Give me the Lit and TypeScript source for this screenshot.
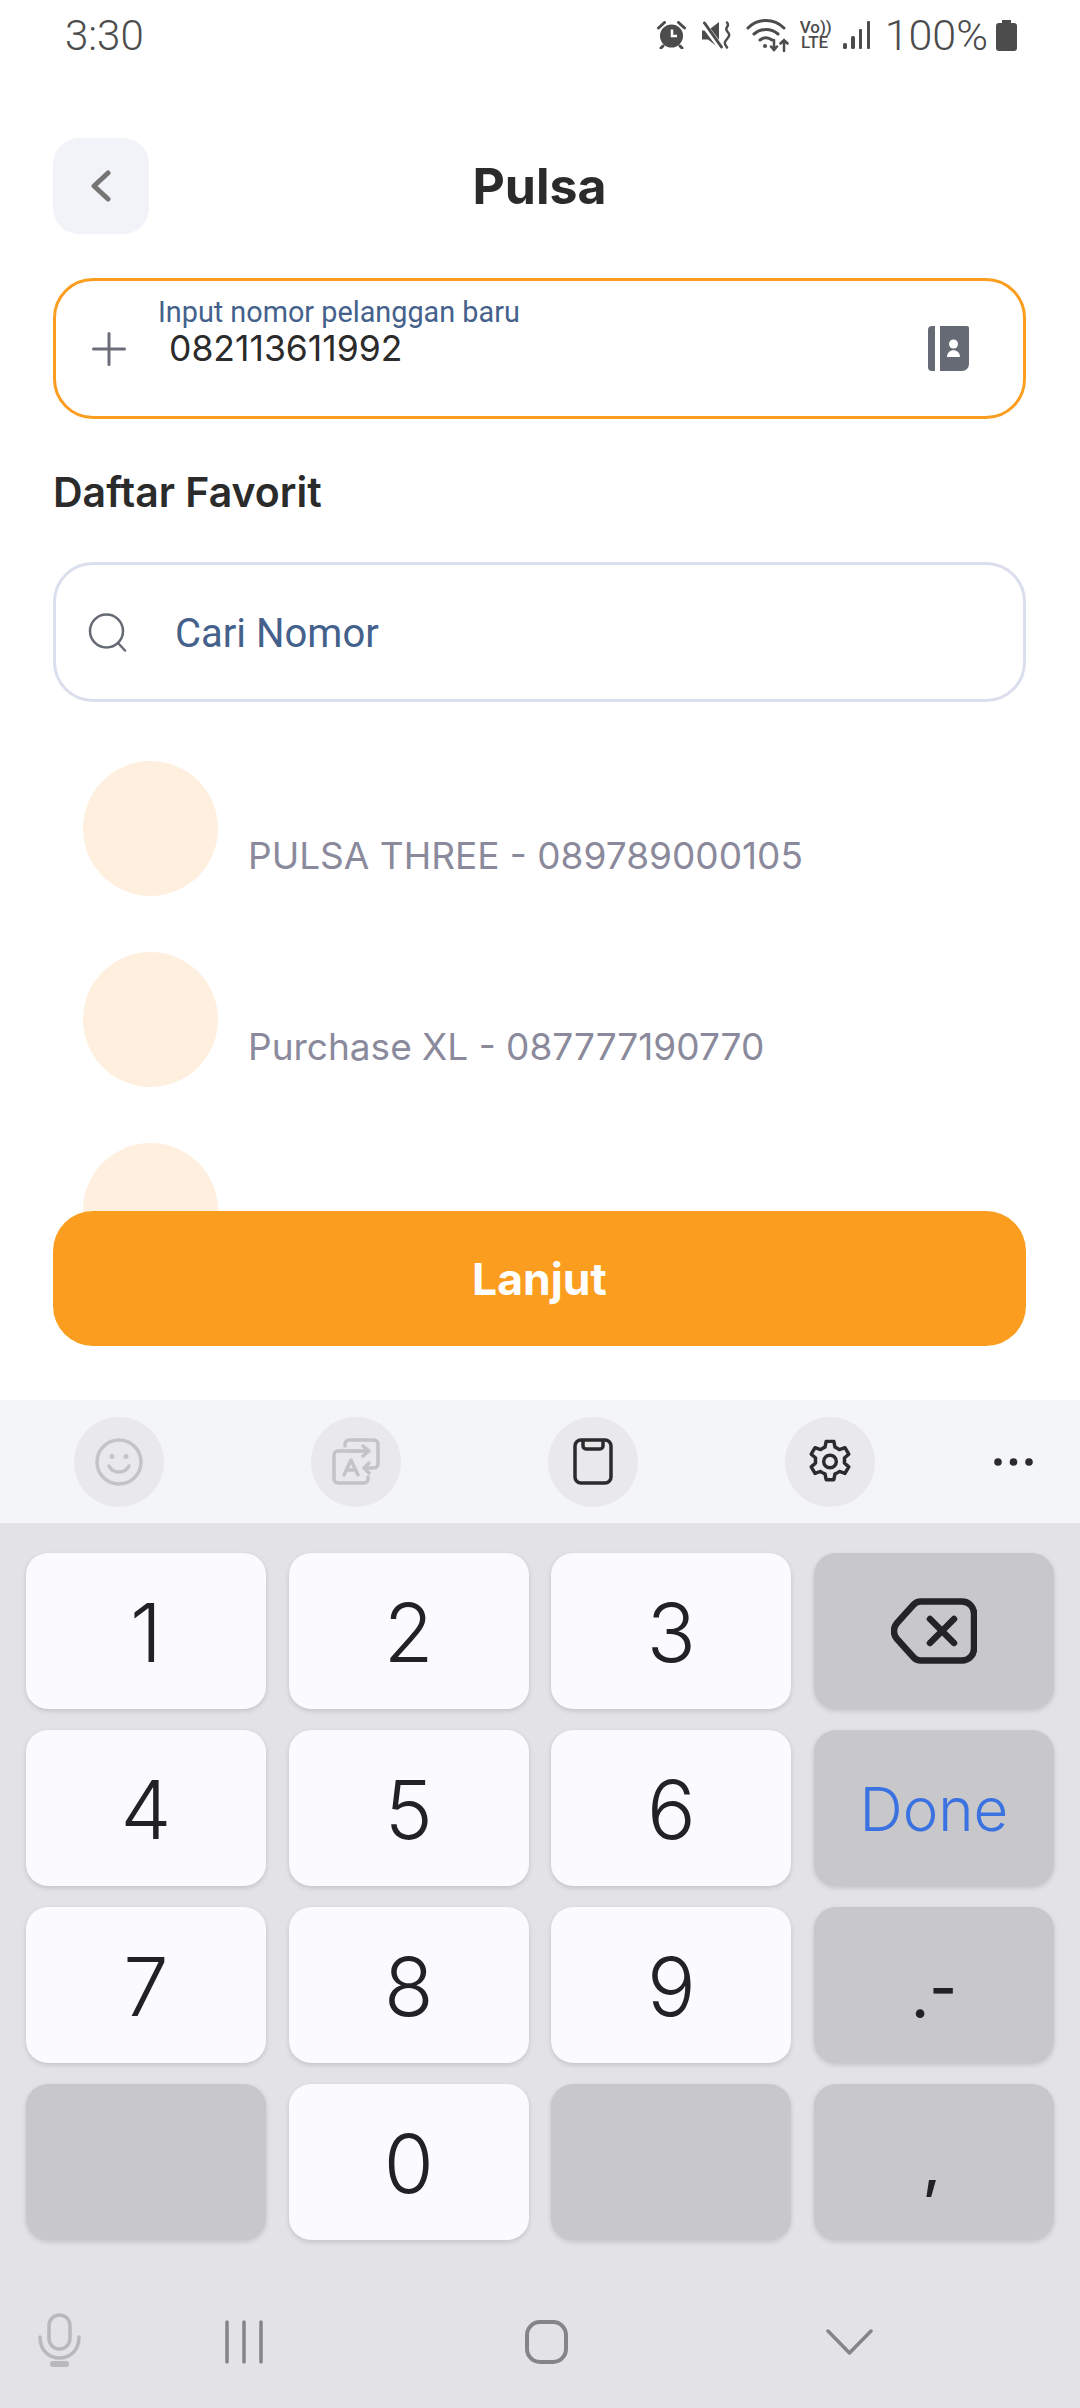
import { LitElement, html, css, svg } from 'lit';
import { customElement } from 'lit/decorators.js';

const backspaceIcon = svg`
  <svg width="86" height="66" viewBox="0 0 86 66" fill="none" stroke="#242426" stroke-width="6.500" stroke-linejoin="round" stroke-linecap="round">
    <path d="M30 3.500h41a12 12 0 0 1 12 12v35a12 12 0 0 1-12 12H30a10 10 0 0 1-7.500-3.300L6 41a12 12 0 0 1 0-16L22.500 6.800a10 10 0 0 1 7.500-3.300z"/>
    <path d="M39 21l24 24M63 21L39 45"/>
  </svg>`;

type Key = { label?: unknown; kind?: 'fn' | 'done'; };

const KEYS: Key[] = [
  { label: '1' }, { label: '2' }, { label: '3' }, { label: backspaceIcon, kind: 'fn' },
  { label: '4' }, { label: '5' }, { label: '6' }, { label: 'Done', kind: 'done' },
  { label: '7' }, { label: '8' }, { label: '9' }, { label: html`<span class="sym dot">.</span><span class="sym dash">-</span>`, kind: 'fn' },
  { kind: 'fn' }, { label: '0' }, { kind: 'fn' }, { label: html`<span class="sym comma">,</span>`, kind: 'fn' },
];

@customElement('app-root')
export class AppRoot extends LitElement {
  static styles = css`
    :host {
      display: block;
      width: 1080px;
      height: 2408px;
      overflow: hidden;
      background: #fff;
      font-family: Inter, 'Noto Sans', sans-serif;
      color: #2b2b2b;
    }

    /* status bar */
    .status {
      display: flex;
      align-items: center;
      height: 70px;
      padding: 0 63px 0 65px;
      color: #4c4c4c;
      font-family: Roboto, sans-serif;
      font-size: 42px;
      font-weight: 300;
    }
    .status svg { display: block; flex: none; }
    .status .time { margin-right: auto; }
    .volte {
      width: 30px;
      margin: 0 13px 0 9px;
      font-size: 17px;
      font-weight: 500;
      line-height: 15px;
      text-align: center;
    }
    .volte div { white-space: nowrap; }
    .pct { margin: 0 8px 0 14px; font-size: 43px; }

    /* page */
    .page { padding: 0 54px 0 53px; }
    .head {
      display: grid;
      grid-template-columns: 96px 1fr 96px;
      align-items: center;
      margin-top: 68px;
      height: 96px;
    }
    .back {
      display: flex;
      align-items: center;
      justify-content: center;
      width: 96px;
      height: 96px;
      border-radius: 26px;
      background: #f1f3f9;
    }
    .title {
      text-align: center;
      font-size: 50px;
      font-weight: 700;
    }
    .box {
      box-sizing: border-box;
      display: flex;
      align-items: center;
      height: 141px;
      border-radius: 40px;
      border: 3px solid #dbdfed;
    }
    .phone {
      margin-top: 44px;
      padding: 0 54px 0 36px;
      border-color: #fb9e1f;
    }
    .phone-text {
      align-self: flex-start;
      margin-left: 32px;
      padding-top: 15px;
    }
    .phone-label {
      font-family: Roboto, sans-serif;
      font-size: 28.800px;
      line-height: 32px;
      color: #44618c;
    }
    .phone-value {
      margin: 1px 0 0 11px;
      font-size: 35.500px;
      line-height: 40px;
      color: #2b2b2b;
    }
    .contact { margin-left: auto; }
    .section {
      margin-top: 50px;
      font-size: 41px;
      font-weight: 600;
      line-height: 46px;
    }
    .search {
      height: 140px;
      margin-top: 47px;
      padding-left: 32px;
      gap: 48px;
    }
    .search span {
      margin-top: 2px;
      font-family: Roboto, sans-serif;
      font-size: 40px;
      color: #44618c;
    }
    .list {
      display: flex;
      flex-direction: column;
      gap: 56px;
      margin-top: 59px;
      padding-left: 30px;
    }
    .row {
      display: flex;
      align-items: flex-end;
      gap: 30px;
    }
    .avatar {
      flex: none;
      width: 135px;
      height: 135px;
      border-radius: 50%;
      background: #ffefde;
    }
    .row span {
      margin-bottom: 20px;
      font-size: 37px;
      line-height: 40px;
      color: #8a8a9c;
    }
    .next {
      position: relative;
      display: flex;
      align-items: center;
      justify-content: center;
      height: 135px;
      margin-top: -67px;
      border-radius: 40px;
      background: #fb9e1f;
      color: #fff;
      font-size: 44.500px;
      font-weight: 700;
    }

    /* keyboard */
    .tools {
      display: flex;
      align-items: center;
      height: 123px;
      margin-top: 54px;
      padding-left: 74px;
      background: #f4f5f7;
    }
    .tool {
      display: flex;
      align-items: center;
      justify-content: center;
      width: 90px;
      height: 90px;
      border-radius: 50%;
      background: #e9e9eb;
    }
    .tool + .tool { margin-left: 147px; }
    .more { margin-left: 119px; }
    .keyboard {
      height: 885px;
      box-sizing: border-box;
      padding-top: 30px;
      background: #e3e3e5;
    }
    .keys {
      display: grid;
      grid-template-columns: repeat(4, 240px);
      grid-auto-rows: 156px;
      column-gap: 22.670px;
      row-gap: 21px;
      padding-left: 26px;
    }
    .key {
      display: flex;
      align-items: center;
      justify-content: center;
      padding-top: 4px;
      border-radius: 22px;
      background: #fbfbfd;
      box-shadow: 0 2px 5px rgba(0, 0, 0, 0.14);
      font-size: 81px;
      font-weight: 350;
      color: #222224;
    }
    .key.fn, .key.done { background: #c8c8ca; }
    .key.fn { padding-top: 0; }
    .key.done {
      padding-top: 2px;
      font-size: 60px;
      font-weight: 300;
      color: #3a72e2;
    }
    .sym {
      font-size: 60px;
      font-weight: 500;
      line-height: 60px;
    }
    .dot { margin-top: 22px; }
    .dash { margin-top: 3px; }
    .comma { margin: 4px 0 0 -4px; }
    .nav {
      display: flex;
      align-items: center;
      margin-top: 73px;
      padding-left: 38px;
    }
    .nav svg { display: block; flex: none; }
    .recents { margin: 4px 0 0 143px; }
    .home { margin: 4px 0 0 261px; }
    .down { margin: 4px 0 0 258px; }
  `;

  private _status() {
    return html`
      <div class="status">
        <span class="time">3:30</span>
        <svg width="29" height="28" viewBox="0 0 29 28" fill="none">
          <circle cx="14.500" cy="15" r="11.500" fill="#4c4c4c"/>
          <path d="M15 8.500V15h5" stroke="#fff" stroke-width="2.500"/>
          <path d="M1.500 7l6-5.500M27.500 7l-6-5.500M6 25l-2 2M23 25l2 2" stroke="#4c4c4c" stroke-width="3" stroke-linecap="round"/>
        </svg>
        <svg style="margin-left:16px" width="29" height="28" viewBox="0 0 29 28" fill="none">
          <path d="M0 9.500h6L17 1v26L6 18.500H0z" fill="#4c4c4c"/>
          <path d="M0 1l20 27" stroke="#fff" stroke-width="6"/>
          <path d="M2.500 2l17 24" stroke="#4c4c4c" stroke-width="3" stroke-linecap="round"/>
          <path d="M25 1.500c3.500 4-3 5 0 8.500s3 4.500 0 8s-3 4.500 0 8.500" stroke="#4c4c4c" stroke-width="2.500" stroke-linecap="round"/>
        </svg>
        <svg style="margin-left:15px" width="45" height="34" viewBox="0 0 45 34" fill="none" stroke="#4c4c4c" stroke-linecap="round">
          <path d="M2 10c10-10 26-10 36 0" stroke-width="3"/>
          <path d="M8 16c7-6 17-6 24 0" stroke-width="3"/>
          <path d="M14 22c4-3 8-3 12 0" stroke-width="3"/>
          <circle cx="19" cy="28" r="2" fill="#4c4c4c" stroke="none"/>
          <path d="M28 22v10M25 28.500l3 3.500 3-3.500M38 33V22M34.500 25.500L38 22l3.500 3.500" stroke-width="2.500"/>
        </svg>
        <div class="volte">
          <div>Vo))</div>
          <div>LTE</div>
        </div>
        <svg width="28" height="28" viewBox="0 0 28 28" fill="#4c4c4c">
          <rect x="0" y="22" width="4" height="6" rx="1.500"/>
          <rect x="8" y="15" width="4" height="13" rx="1.500"/>
          <rect x="16" y="8" width="3" height="20" rx="1"/>
          <rect x="24" y="0" width="3" height="28" rx="1"/>
        </svg>
        <span class="pct">100%</span>
        <svg width="21" height="31" viewBox="0 0 21 31" fill="#4c4c4c">
          <path d="M6 0h9v3h3a3 3 0 0 1 3 3v22a3 3 0 0 1-3 3H3a3 3 0 0 1-3-3V6a3 3 0 0 1 3-3h3z"/>
        </svg>
      </div>
    `;
  }

  private _tools() {
    return html`
      <div class="tools">
        <div class="tool">
          <svg width="48" height="48" viewBox="0 0 48 48" fill="none" stroke="#c4c4c6" stroke-width="3.500" stroke-linecap="round">
            <circle cx="24" cy="24" r="22"/>
            <path d="M14 28c4 8 16 8 20 0"/>
            <circle cx="17" cy="18.500" r="2.500" fill="#c4c4c6" stroke="none"/>
            <circle cx="31" cy="18.500" r="2.500" fill="#c4c4c6" stroke="none"/>
          </svg>
        </div>
        <div class="tool">
          <svg width="48" height="48" viewBox="0 0 48 48" fill="none" stroke="#c4c4c6" stroke-width="3.500" stroke-linecap="round" stroke-linejoin="round">
            <path d="M13 8V6a4 4 0 0 1 4-4h25a4 4 0 0 1 4 4v20a4 4 0 0 1-4 4h-9"/>
            <path d="M17 13h20M31 8l6 5-6 5M32 30l5-5M32 30l5 5"/>
            <path d="M28 13H6a4 4 0 0 0-4 4v24a4 4 0 0 0 4 4h26a4 4 0 0 0 4-4v-2"/>
            <path d="M12 37l7-15 7 15M14.500 32h9"/>
          </svg>
        </div>
        <div class="tool">
          <svg width="40" height="47" viewBox="0 0 40 47" fill="none" stroke="#2b2b2d" stroke-width="3.500" stroke-linejoin="round">
            <rect x="2" y="2" width="36" height="43" rx="6"/>
            <path d="M10 2v6a3 3 0 0 0 3 3h14a3 3 0 0 0 3-3V2"/>
          </svg>
        </div>
        <div class="tool">
          <svg width="46" height="47" viewBox="0 0 24 24" fill="none" stroke="#2b2b2d" stroke-width="1.800" stroke-linejoin="round">
            <circle cx="12" cy="12" r="3.300"/>
            <path d="M10 1.500h4l.6 3a8 8 0 0 1 2.300 1.300l2.900-1 2 3.400-2.300 2a8 8 0 0 1 0 2.600l2.300 2-2 3.400-2.900-1a8 8 0 0 1-2.300 1.300l-.6 3h-4l-.6-3a8 8 0 0 1-2.300-1.300l-2.900 1-2-3.400 2.300-2a8 8 0 0 1 0-2.600l-2.300-2 2-3.400 2.900 1a8 8 0 0 1 2.300-1.300z"/>
          </svg>
        </div>
        <svg class="more" width="39" height="10" viewBox="0 0 39 10" fill="#2b2b2d">
          <circle cx="4" cy="5" r="3.800"/>
          <circle cx="19.500" cy="5" r="3.800"/>
          <circle cx="35" cy="5" r="3.800"/>
        </svg>
      </div>
    `;
  }

  private _nav() {
    return html`
      <div class="nav">
        <svg width="43" height="54" viewBox="0 0 43 54" fill="none" stroke="#b9b9bb" stroke-width="3.500" stroke-linecap="round">
          <rect x="11" y="2" width="21" height="34" rx="10.500"/>
          <path d="M2 24c0 28 39 28 39 0"/>
          <path d="M15 51h13" stroke-width="6"/>
        </svg>
        <svg class="recents" width="40" height="44" viewBox="0 0 40 44" stroke="#858587" stroke-width="3.500" stroke-linecap="round">
          <path d="M3 2v40M20 2v40M37 2v40"/>
        </svg>
        <svg class="home" width="43" height="44" viewBox="0 0 43 44" fill="none" stroke="#858587" stroke-width="4">
          <rect x="2" y="2" width="39" height="40" rx="13"/>
        </svg>
        <svg class="down" width="47" height="26" viewBox="0 0 47 26" fill="none" stroke="#858587" stroke-width="3.500" stroke-linecap="round" stroke-linejoin="round">
          <path d="M2 2l21.500 22L45 2"/>
        </svg>
      </div>
    `;
  }

  render() {
    return html`
      ${this._status()}
      <div class="page">
        <div class="head">
          <div class="back">
            <svg width="20" height="32" viewBox="0 0 20 32" fill="none" stroke="#757575" stroke-width="5" stroke-linecap="round" stroke-linejoin="round">
              <path d="M17 3L3 16l14 13"/>
            </svg>
          </div>
          <div class="title">Pulsa</div>
        </div>

        <div class="box phone">
          <svg width="34" height="34" viewBox="0 0 34 34" stroke="#6b6e78" stroke-width="3" stroke-linecap="round">
            <path d="M17 1.500v31M1.500 17h31"/>
          </svg>
          <div class="phone-text">
            <div class="phone-label">Input nomor pelanggan baru</div>
            <div class="phone-value">082113611992</div>
          </div>
          <svg class="contact" width="41" height="45" viewBox="0 0 41 45">
            <path d="M7 0v45H4a4 4 0 0 1-4-4V4a4 4 0 0 1 4-4z" fill="#666a74"/>
            <path d="M12 0h27a2 2 0 0 1 2 2v36a7 7 0 0 1-7 7H12z" fill="#666a74"/>
            <circle cx="25.500" cy="18" r="4.500" fill="#fff"/>
            <path d="M19 31c0-9 13-9 13 0z" fill="#fff"/>
          </svg>
        </div>

        <div class="section">Daftar Favorit</div>

        <div class="box search">
          <svg width="39" height="39" viewBox="0 0 39 39" fill="none" stroke="#666a74" stroke-width="2.500" stroke-linecap="round">
            <circle cx="18.500" cy="18" r="16.500"/>
            <path d="M30 30l7 7.500"/>
          </svg>
          <span>Cari Nomor</span>
        </div>

        <div class="list">
          <div class="row"><div class="avatar"></div><span>PULSA THREE - 089789000105</span></div>
          <div class="row"><div class="avatar"></div><span>Purchase XL - 087777190770</span></div>
          <div class="row"><div class="avatar"></div></div>
        </div>

        <div class="next">Lanjut</div>
      </div>

      ${this._tools()}
      <div class="keyboard">
        <div class="keys">
          ${KEYS.map((k) => html`<div class="key ${k.kind ?? ''}">${k.label ?? ''}</div>`)}
        </div>
        ${this._nav()}
      </div>
    `;
  }
}
